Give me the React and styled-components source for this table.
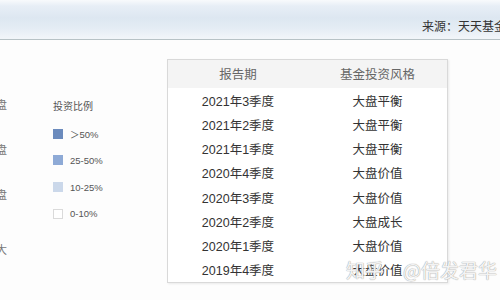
import React from 'react';
import styled, { createGlobalStyle } from 'styled-components';

const Global = createGlobalStyle`
  html, body { margin: 0; padding: 0; background: #fff; }
  #root { width: 500px; height: 300px; overflow: hidden; }
`;

const Page = styled.div`
  position: relative;
  width: 500px;
  height: 300px;
  overflow: hidden;
  background: #fdfdfd;
  font-family: "Liberation Sans", "Noto Sans CJK SC", sans-serif;
`;

const TopBar = styled.div`
  box-sizing: border-box;
  height: 40px;
  padding-top: 11px;
  border-bottom: 1px solid #b7c2c6;
  background: linear-gradient(
    to bottom,
    #f8fafc 0px,
    #e7eef6 6px,
    #dde7f1 18px,
    #e4ecf4 28px,
    #f1f5f9 38px
  );
  display: flex;
  align-items: center;
  justify-content: flex-end;
`;

const Source = styled.span`
  font-size: 12px;
  color: #333;
  white-space: nowrap;
  margin-right: -6px;
`;

const Body = styled.div`
  display: flex;
  align-items: flex-start;
  height: 260px;
`;

const Strip = styled.div`
  width: 9px;
  overflow: hidden;
  display: flex;
  flex-direction: column;
`;

const StripChar = styled.span`
  display: block;
  height: 14px;
  line-height: 14px;
  margin-top: ${(p) => p.$gap}px;
  margin-left: -4px;
  font-size: 11px;
  color: #777;
  white-space: nowrap;
`;

const Legend = styled.div`
  width: 114px;
  margin-left: 44px;
  padding-top: 61px;
  display: flex;
  flex-direction: column;
  gap: 14.7px;
`;

const LegendTitle = styled.div`
  height: 12px;
  line-height: 12px;
  font-size: 10px;
  color: #555;
`;

const LegendItem = styled.div`
  display: flex;
  align-items: center;
  height: 12px;
  font-size: 9.5px;
  color: #555;
`;

const Swatch = styled.span`
  box-sizing: border-box;
  width: 10px;
  height: 10px;
  margin-right: 7px;
  background: ${(p) => p.$color};
  border: 1px solid ${(p) => p.$border};
`;

const Panel = styled.div`
  box-sizing: border-box;
  width: 281px;
  height: 224px;
  margin-top: 19px;
  border: 1px solid #d9d9d9;
  box-shadow: 1px 1px 2px rgba(0, 0, 0, 0.08);
  background: #fff;
  display: flex;
  flex-direction: column;
`;

const HeadRow = styled.div`
  display: grid;
  grid-template-columns: 140px 1fr;
  height: 28px;
  align-items: center;
  background: #f4f4f4;
  color: #666;
  font-size: 12.5px;
  text-align: center;
`;

const Row = styled.div`
  display: grid;
  grid-template-columns: 140px 1fr;
  height: 24.3px;
  align-items: center;
  color: #333;
  font-size: 12.5px;
  text-align: center;
`;

const Watermark = styled.div`
  position: absolute;
  left: 346px;
  top: 258px;
  display: flex;
  align-items: center;
  gap: 19px;
  font-size: 19px;
  line-height: 24px;
  white-space: nowrap;
  color: rgba(255, 255, 255, 0.9);
  text-shadow: 0 0 1px #a0a0a0, 0 0 1px #b0b0b0;
  font-family: "Noto Sans CJK SC", sans-serif;
`;

const legend = [
  { label: '＞50%', color: '#6b8bbd', border: '#6b8bbd' },
  { label: '25-50%', color: '#8eaad6', border: '#8eaad6' },
  { label: '10-25%', color: '#cbd8ea', border: '#cbd8ea' },
  { label: '0-10%', color: '#ffffff', border: '#dadada' },
];

const rows = [
  ['2021年3季度', '大盘平衡'],
  ['2021年2季度', '大盘平衡'],
  ['2021年1季度', '大盘平衡'],
  ['2020年4季度', '大盘价值'],
  ['2020年3季度', '大盘价值'],
  ['2020年2季度', '大盘成长'],
  ['2020年1季度', '大盘价值'],
  ['2019年4季度', '大盘价值'],
];

const strip = [
  { ch: '盘', gap: 58 },
  { ch: '盘', gap: 31 },
  { ch: '盘', gap: 31 },
  { ch: '大', gap: 41 },
];

export default function App() {
  return (
    <Page>
      <Global />
      <TopBar>
        <Source>来源：天天基金</Source>
      </TopBar>
      <Body>
        <Strip>
          {strip.map((s, i) => (
            <StripChar key={i} $gap={s.gap}>{s.ch}</StripChar>
          ))}
        </Strip>
        <Legend>
          <LegendTitle>投资比例</LegendTitle>
          {legend.map((l) => (
            <LegendItem key={l.label}>
              <Swatch $color={l.color} $border={l.border} />
              {l.label}
            </LegendItem>
          ))}
        </Legend>
        <Panel>
          <HeadRow>
            <span>报告期</span>
            <span>基金投资风格</span>
          </HeadRow>
          {rows.map((r) => (
            <Row key={r[0]}>
              <span>{r[0]}</span>
              <span>{r[1]}</span>
            </Row>
          ))}
        </Panel>
      </Body>
      <Watermark>
        <span>知乎</span>
        <span>@倍发君华</span>
      </Watermark>
    </Page>
  );
}
